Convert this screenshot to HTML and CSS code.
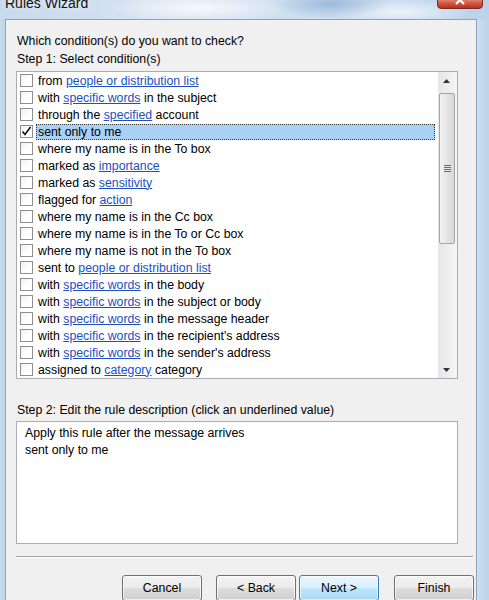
FILE: index.html
```html
<!DOCTYPE html>
<html>
<head>
<meta charset="utf-8">
<title>Rules Wizard</title>
<link rel="stylesheet" href="styles.css">
</head>
<body>
<div class="window">
  <div class="titlebar">
    <span class="title">Rules Wizard</span>
    <div class="close"><svg width="14" height="8" viewBox="0 0 14 8"><path d="M3 -3 L11 5 M11 -3 L3 5" stroke="#fff" stroke-width="2.2" fill="none"/></svg></div>
  </div>
  <div class="body">
    <div class="frame-l"></div>
    <div class="panel">
      <div class="label">Which condition(s) do you want to check?</div>
      <div class="label">Step 1: Select condition(s)</div>
      <div class="listbox">
        <ul class="rows">
          <li class="row"><span class="cb"></span><span class="txt">from <a>people or distribution list</a></span></li>
          <li class="row"><span class="cb"></span><span class="txt">with <a>specific words</a> in the subject</span></li>
          <li class="row"><span class="cb"></span><span class="txt">through the <a>specified</a> account</span></li>
          <li class="row"><span class="cb checked"><svg width="11" height="11" viewBox="0 0 11 11"><path d="M1.5 5.5 L4 8.5 L9.5 1" stroke="#111" stroke-width="1.6" fill="none"/></svg></span><span class="txt sel">sent only to me</span></li>
          <li class="row"><span class="cb"></span><span class="txt">where my name is in the To box</span></li>
          <li class="row"><span class="cb"></span><span class="txt">marked as <a>importance</a></span></li>
          <li class="row"><span class="cb"></span><span class="txt">marked as <a>sensitivity</a></span></li>
          <li class="row"><span class="cb"></span><span class="txt">flagged for <a>action</a></span></li>
          <li class="row"><span class="cb"></span><span class="txt">where my name is in the Cc box</span></li>
          <li class="row"><span class="cb"></span><span class="txt">where my name is in the To or Cc box</span></li>
          <li class="row"><span class="cb"></span><span class="txt">where my name is not in the To box</span></li>
          <li class="row"><span class="cb"></span><span class="txt">sent to <a>people or distribution list</a></span></li>
          <li class="row"><span class="cb"></span><span class="txt">with <a>specific words</a> in the body</span></li>
          <li class="row"><span class="cb"></span><span class="txt">with <a>specific words</a> in the subject or body</span></li>
          <li class="row"><span class="cb"></span><span class="txt">with <a>specific words</a> in the message header</span></li>
          <li class="row"><span class="cb"></span><span class="txt">with <a>specific words</a> in the recipient's address</span></li>
          <li class="row"><span class="cb"></span><span class="txt">with <a>specific words</a> in the sender's address</span></li>
          <li class="row"><span class="cb"></span><span class="txt">assigned to <a>category</a> category</span></li>
        </ul>
        <div class="scrollbar">
          <div class="sb-btn"><svg width="7" height="4" viewBox="0 0 7 4"><path d="M0 4 L3.5 0 L7 4 Z" fill="#333"/></svg></div>
          <div class="sb-track">
            <div class="thumb"><span class="grip"></span></div>
          </div>
          <div class="sb-btn"><svg width="7" height="4" viewBox="0 0 7 4"><path d="M0 0 L7 0 L3.5 4 Z" fill="#333"/></svg></div>
        </div>
      </div>
      <div class="label step2">Step 2: Edit the rule description (click an underlined value)</div>
      <div class="desc">
        <div>Apply this rule after the message arrives</div>
        <div>sent only to me</div>
      </div>
      <div class="sep"></div>
      <div class="buttons">
        <button class="btn cancel">Cancel</button>
        <button class="btn back">&lt; Back</button>
        <button class="btn next">Next &gt;</button>
        <button class="btn finish">Finish</button>
      </div>
    </div>
    <div class="frame-r"></div>
  </div>
</div>
</body>
</html>
```
FILE: styles.css
```css
html, body {
  margin: 0;
  padding: 0;
}
body {
  width: 489px;
  height: 600px;
  overflow: hidden;
  font-family: "Liberation Sans", Arial, sans-serif;
  font-size: 12.3px;
  color: #000;
  background: #c9dcef;
}
.window {
  width: 489px;
  height: 600px;
  display: flex;
  flex-direction: column;
}
.titlebar {
  height: 19px;
  flex: none;
  position: relative;
  background:
    radial-gradient(ellipse 60px 14px at 330px 4px, rgba(120,160,205,0.55), rgba(120,160,205,0) 100%),
    radial-gradient(ellipse 90px 16px at 200px 8px, rgba(255,255,255,0.8), rgba(255,255,255,0) 100%),
    radial-gradient(ellipse 70px 14px at 400px 12px, rgba(255,255,255,0.7), rgba(255,255,255,0) 100%),
    linear-gradient(to right, #c7d9ec 0%, #d6e3f1 30%, #cfdff0 60%, #bcd2ea 100%);
}
.title {
  position: absolute;
  left: 5px;
  top: -6px;
  font-size: 14px;
  line-height: 18px;
  color: #111;
  text-shadow: 0 0 6px rgba(255,255,255,0.9);
}
.close {
  position: absolute;
  left: 437px;
  top: -2px;
  width: 46px;
  height: 11px;
  box-sizing: border-box;
  border: 1px solid #7a2a1e;
  border-radius: 0 0 4px 4px;
  background: linear-gradient(to bottom, #e0907f 0%, #d0533e 50%, #b8321e 100%);
  display: flex;
  justify-content: center;
  align-items: flex-start;
}
.body {
  flex: 1;
  display: flex;
}
.frame-l {
  width: 5px;
  flex: none;
  background: linear-gradient(to right, #c9dcef, #bfd4ea);
}
.frame-r {
  width: 12px;
  flex: none;
  background: linear-gradient(to right, #cddff0, #bcd2ea);
}
.panel {
  width: 472px;
  flex: none;
  box-sizing: border-box;
  background: #f0f0f0;
  border: 1px solid #8ea3ba;
  border-bottom: none;
  padding: 12px 0 0 10px;
}
.label {
  line-height: 18px;
  padding-left: 1px;
  white-space: nowrap;
}
.listbox {
  margin-top: 3px;
  width: 442px;
  height: 308px;
  box-sizing: border-box;
  border: 1px solid #abadb3;
  background: #fff;
  display: flex;
}
.rows {
  list-style: none;
  margin: 0;
  padding: 0;
  flex: 1;
}
.row {
  height: 17px;
  display: flex;
  align-items: center;
  padding-left: 3px;
}
.cb {
  width: 13px;
  height: 13px;
  box-sizing: border-box;
  border: 1px solid #8f8f8f;
  background: linear-gradient(135deg, #f0f0f0, #fff 60%);
  flex: none;
  display: flex;
  align-items: center;
  justify-content: center;
}
.txt {
  flex: 1;
  margin-left: 3px;
  margin-right: 3px;
  padding-left: 2px;
  height: 16px;
  line-height: 17px;
  white-space: nowrap;
  box-sizing: border-box;
}
.txt.sel {
  background: #a9d0f5;
  outline: 1px dotted #3a3a3a;
  outline-offset: -1px;
}
.txt a {
  color: #1b4fc4;
  text-decoration: underline;
}
.scrollbar {
  width: 19px;
  flex: none;
  display: flex;
  flex-direction: column;
  background: linear-gradient(to right, #e6e6e6, #f0f0f0 70%, #f7f7f7);
}
.sb-btn {
  height: 17px;
  flex: none;
  display: flex;
  align-items: center;
  justify-content: center;
  padding-right: 2px;
}
.sb-track {
  flex: 1;
  padding-top: 4px;
}
.thumb {
  margin: 0 2px 0 1px;
  height: 151px;
  box-sizing: border-box;
  border: 1px solid #a4a4a4;
  border-radius: 2px;
  background: linear-gradient(to right, #f2f2f2, #e6e6e6 45%, #d7d7d7);
  display: flex;
  align-items: center;
  justify-content: center;
}
.grip {
  width: 7px;
  height: 7px;
  background: repeating-linear-gradient(to bottom, #6a6a6a 0, #6a6a6a 1px, #e8e8e8 1px, #e8e8e8 2px);
}
.step2 {
  margin-top: 22px;
}
.desc {
  margin-top: 2px;
  width: 442px;
  height: 123px;
  box-sizing: border-box;
  border: 1px solid #abadb3;
  background: #fff;
  padding: 3px 0 0 8px;
  line-height: 17px;
}
.sep {
  margin-top: 12px;
  width: 457px;
  height: 0;
  border-top: 1px solid #a0a0a0;
  border-bottom: 1px solid #fff;
}
.buttons {
  display: flex;
  margin-top: 17px;
}
.btn {
  width: 80px;
  height: 26px;
  flex: none;
  font-family: "Liberation Sans", Arial, sans-serif;
  font-size: 12.3px;
  color: #000;
  border: 1px solid #707070;
  border-radius: 3px;
  background: linear-gradient(to bottom, #f2f2f2 0%, #ebebeb 50%, #dddddd 51%, #cfcfcf 100%);
  box-shadow: inset 0 0 0 1px rgba(255,255,255,0.7);
  padding: 0;
}
.cancel { margin-left: 106px; }
.back { margin-left: 14px; }
.next {
  margin-left: 3px;
  border-color: #3c7fb1;
  background: linear-gradient(to bottom, #eaf6fd 0%, #d9f0fc 50%, #bee6fd 51%, #a7d9f5 100%);
  box-shadow: inset 0 0 0 1px rgba(255,255,255,0.6);
}
.finish { margin-left: 15px; }
```
